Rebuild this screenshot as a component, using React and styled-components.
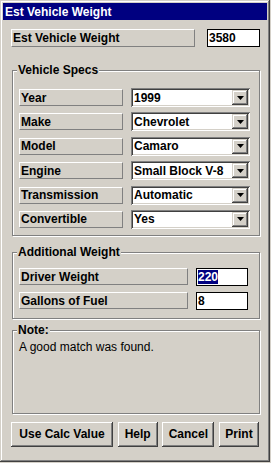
import styled, { createGlobalStyle } from "styled-components";

const GlobalStyle = createGlobalStyle`
  html, body {
    margin: 0;
    padding: 0;
    background: #d4d0c8;
  }
  body {
    font-family: "Liberation Sans", Arial, sans-serif;
    font-size: 12px;
    color: #000;
  }
`;

const Window = styled.div`
  width: 270px;
  height: 462px;
  box-sizing: border-box;
  padding: 3px;
  background: #d4d0c8;
  box-shadow: inset -1px -1px #404040, inset 1px 1px #d4d0c8,
    inset -2px -2px #808080, inset 2px 2px #ffffff;
  display: flex;
  flex-direction: column;
`;

const TitleBar = styled.div`
  height: 17px;
  background: #000080;
  color: #fff;
  font-weight: bold;
  font-size: 12px;
  padding-left: 2px;
  display: flex;
  align-items: center;
`;

const Body = styled.div`
  padding: 9px 7px 0 8px;
  display: flex;
  flex-direction: column;
`;

const Row = styled.div`
  display: flex;
  align-items: center;
  gap: ${(p) => p.$gap || 8}px;
  height: ${(p) => p.$h || 19}px;
`;

const FieldLabel = styled.div`
  box-sizing: border-box;
  width: ${(p) => p.$w}px;
  height: ${(p) => p.$h || 17}px;
  border: 1px solid;
  border-color: #ffffff #808080 #808080 #ffffff;
  padding-left: 1px;
  font-weight: bold;
  display: flex;
  align-items: center;
  white-space: nowrap;
`;

const TextBox = styled.div`
  box-sizing: border-box;
  width: ${(p) => p.$w}px;
  height: 18px;
  background: #fff;
  border: 1px solid #000;
  padding-left: 1px;
  font-weight: bold;
  display: flex;
  align-items: center;
`;

const Selected = styled.span`
  background: #000080;
  color: #fff;
  line-height: 14px;
`;

const Group = styled.div`
  position: relative;
  margin: ${(p) => p.$mt}px 0 0 1px;
  width: 248px;
  box-sizing: border-box;
  height: ${(p) => (p.$h ? `${p.$h}px` : "auto")};
  border: 1px solid #808080;
  box-shadow: inset 1px 1px 0 #fff, 1px 1px 0 #fff;
  padding: ${(p) => p.$pt}px 0 ${(p) => p.$pb || 0}px 6px;
  display: flex;
  flex-direction: column;
  gap: ${(p) => p.$gap || 0}px;
`;

const Legend = styled.div`
  position: absolute;
  top: -8px;
  left: 4px;
  padding: 0 1px;
  line-height: 14px;
  font-weight: bold;
  background: #d4d0c8;
`;

const Combo = styled.div`
  box-sizing: border-box;
  width: 119px;
  height: 19px;
  padding: 2px;
  background: #fff;
  box-shadow: inset 1px 1px #808080, inset -1px -1px #ffffff,
    inset 2px 2px #404040, inset -2px -2px #d4d0c8;
  display: flex;
`;

const ComboValue = styled.div`
  flex: 1;
  padding-left: 1px;
  font-weight: bold;
  display: flex;
  align-items: center;
  white-space: nowrap;
  overflow: hidden;
`;

const DropButton = styled.div`
  width: 16px;
  background: #d4d0c8;
  box-shadow: inset -1px -1px #404040, inset 1px 1px #d4d0c8,
    inset -2px -2px #808080, inset 2px 2px #ffffff;
  display: flex;
  align-items: center;
  justify-content: center;
`;

const NoteText = styled.div`
  line-height: 14px;
`;

const ButtonBar = styled.div`
  margin-top: 8px;
  display: flex;
  justify-content: space-between;
  width: 248px;
`;

const Button = styled.button`
  box-sizing: border-box;
  width: ${(p) => p.$w}px;
  height: 25px;
  padding: 0;
  border: none;
  background: #d4d0c8;
  box-shadow: inset -1px -1px #404040, inset 1px 1px #ffffff,
    inset -2px -2px #808080, inset 2px 2px #d4d0c8;
  font-family: "Liberation Sans", Arial, sans-serif;
  font-size: 12px;
  font-weight: bold;
  color: #000;
`;

const specs = [
  ["Year", "1999"],
  ["Make", "Chevrolet"],
  ["Model", "Camaro"],
  ["Engine", "Small Block V-8"],
  ["Transmission", "Automatic"],
  ["Convertible", "Yes"],
];

const Arrow = () => (
  <svg width="7" height="4" viewBox="0 0 7 4">
    <polygon points="0,0 7,0 3.5,4" fill="#000" />
  </svg>
);

const Select = ({ value }) => (
  <Combo>
    <ComboValue>{value}</ComboValue>
    <DropButton>
      <Arrow />
    </DropButton>
  </Combo>
);

const App = () => {
  return (
    <>
      <GlobalStyle />
      <Window>
        <TitleBar>Est Vehicle Weight</TitleBar>
        <Body>
          <Row $gap={12} $h={18}>
            <FieldLabel $w={184} $h={18}>Est Vehicle Weight</FieldLabel>
            <TextBox $w={53}>3580</TextBox>
          </Row>

          <Group $mt={23} $pt={17} $pb={6} $gap={5.4}>
            <Legend>Vehicle Specs</Legend>
            {specs.map(([label, value]) => (
              <Row key={label}>
                <FieldLabel $w={104}>{label}</FieldLabel>
                <Select value={value} />
              </Row>
            ))}
          </Group>

          <Group $mt={16} $pt={15} $pb={8} $gap={6}>
            <Legend>Additional Weight</Legend>
            <Row $h={18}>
              <FieldLabel $w={169}>Driver Weight</FieldLabel>
              <TextBox $w={52}>
                <Selected>220</Selected>
              </TextBox>
            </Row>
            <Row $h={18}>
              <FieldLabel $w={169}>Gallons of Fuel</FieldLabel>
              <TextBox $w={52}>8</TextBox>
            </Row>
          </Group>

          <Group $mt={11} $pt={9} $h={84}>
            <Legend>Note:</Legend>
            <NoteText>A good match was found.</NoteText>
          </Group>

          <ButtonBar>
            <Button $w={102}>Use Calc Value</Button>
            <Button $w={40}>Help</Button>
            <Button $w={52}>Cancel</Button>
            <Button $w={40}>Print</Button>
          </ButtonBar>
        </Body>
      </Window>
    </>
  );
};

export default App;
